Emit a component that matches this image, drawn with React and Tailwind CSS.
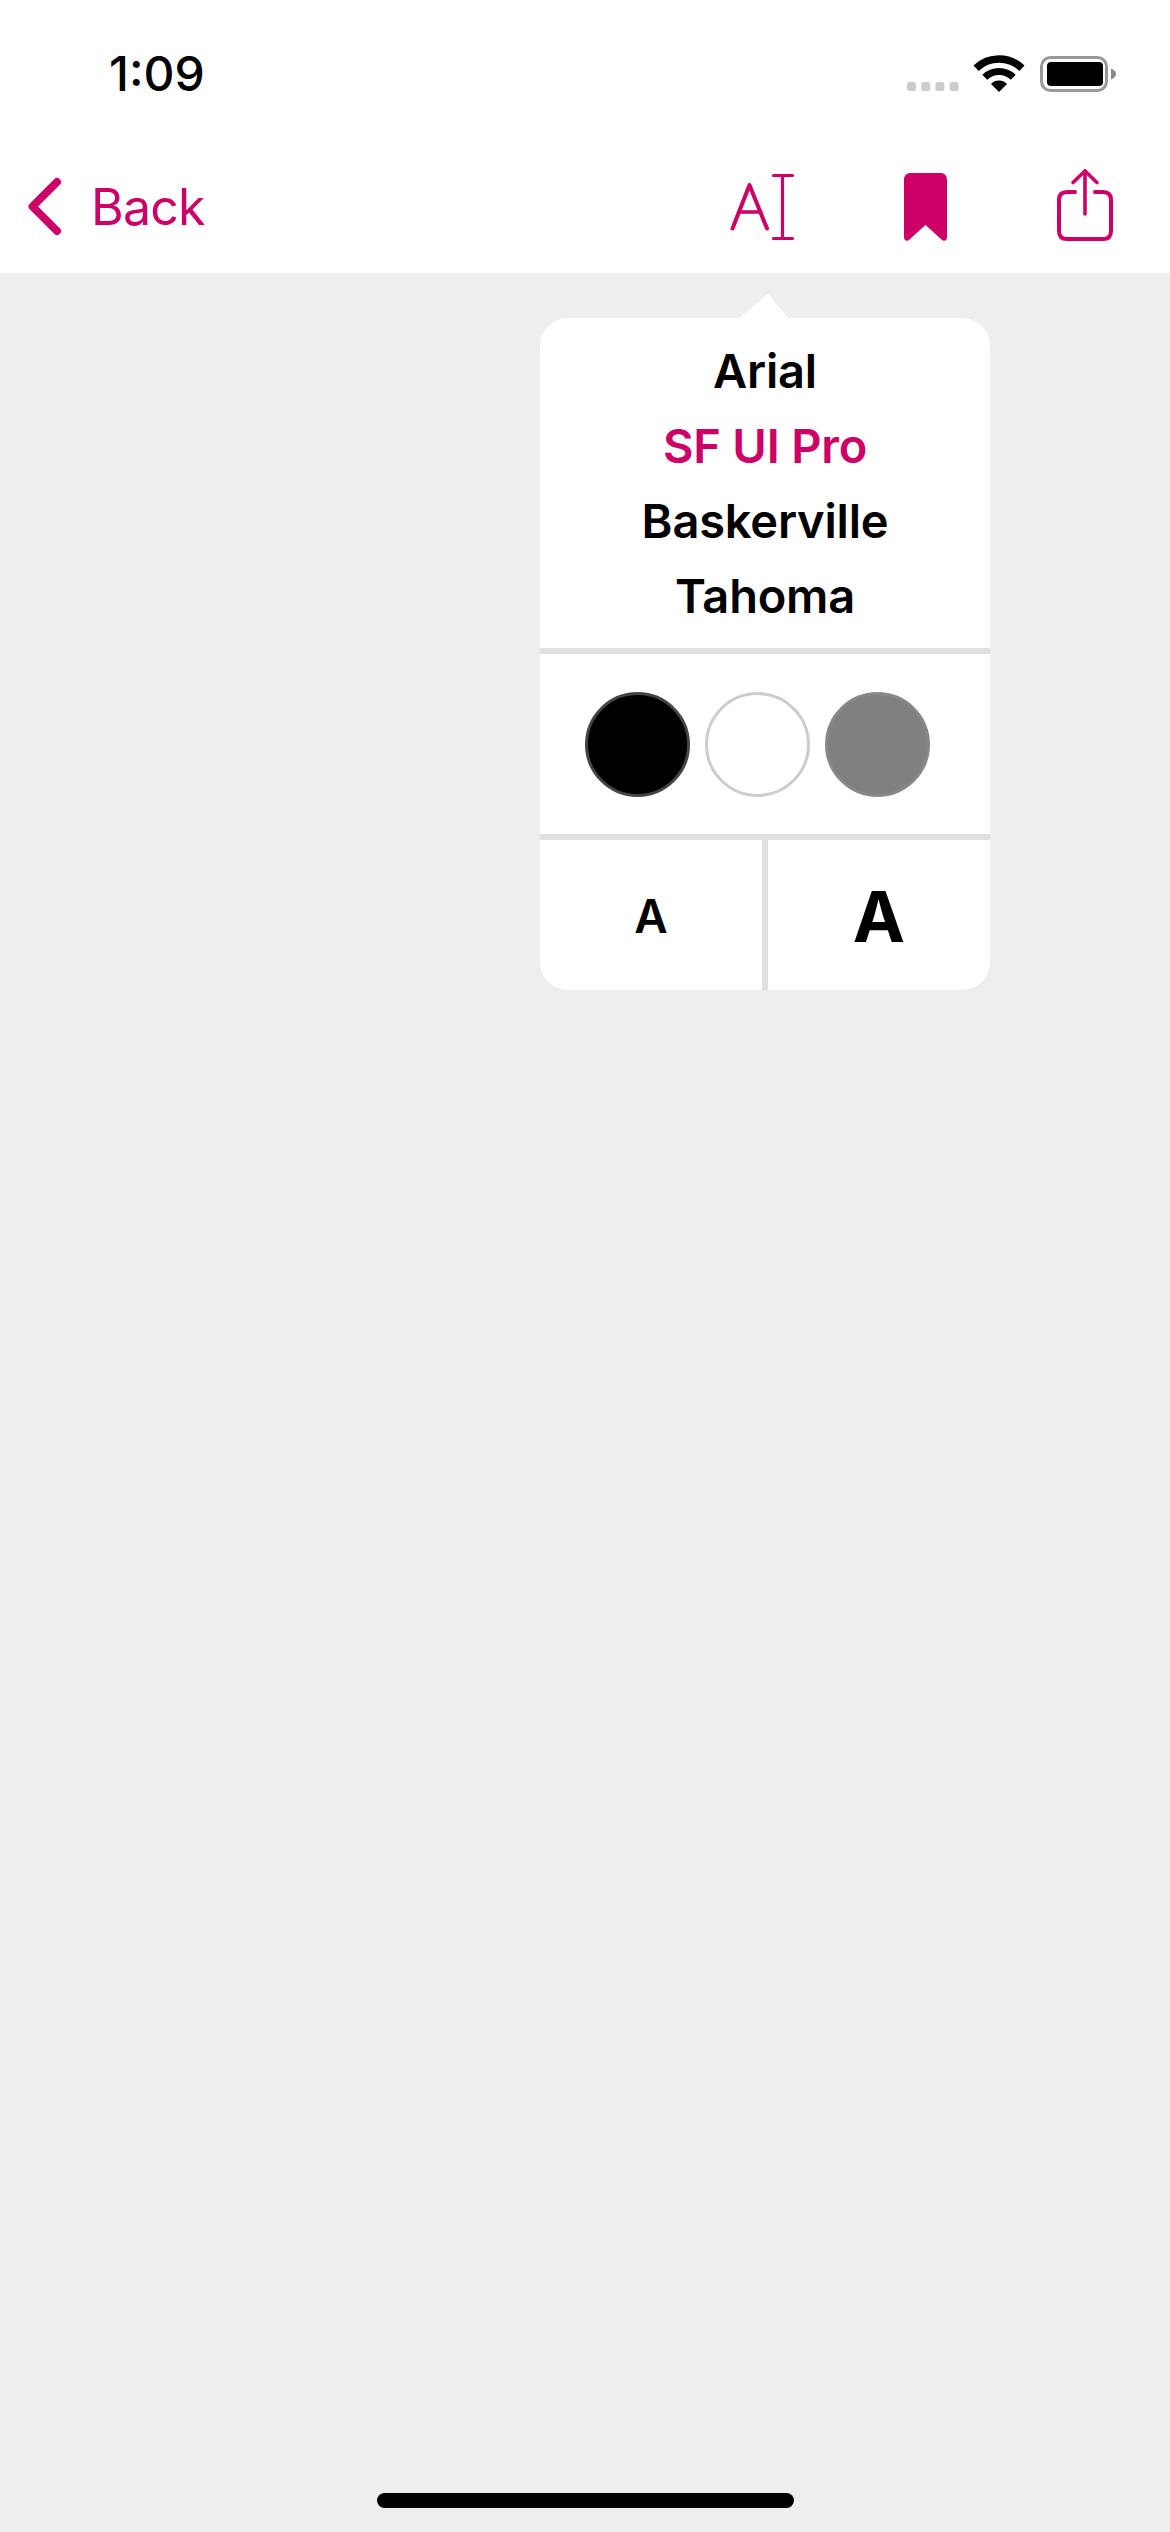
import React from "react";

const pink = "#cc0066";

function arc(cx, cy, r, deg) {
  const a = (deg * Math.PI) / 180;
  const dx = r * Math.sin(a);
  const dy = r * Math.cos(a);
  return `M${cx - dx} ${cy - dy}A${r} ${r} 0 0 1 ${cx + dx} ${cy - dy}`;
}

function StatusIcons() {
  return (
    <svg width="220" height="44" viewBox="900 52 220 44" className="block">
      {[907, 921.2, 935.4, 949.6].map((x) => (
        <rect key={x} x={x} y="82" width="9" height="9" rx="2.5" fill="#cccccc" />
      ))}
      <path d={arc(999, 92, 33, 44)} fill="none" stroke="#000" strokeWidth="7.5" />
      <path d={arc(999, 92, 20.5, 44)} fill="none" stroke="#000" strokeWidth="7" />
      <path d="M999 92L991 84A11 11 0 0 1 1007 84Z" fill="#000" />
      <rect x="1041.5" y="57.5" width="65" height="33" rx="9" fill="#fff" stroke="#999999" strokeWidth="3" />
      <rect x="1047" y="62" width="56" height="24" rx="4" fill="#000" />
      <path d="M1111 68.5C1114.5 70 1116 72 1116 74C1116 76 1114.5 78 1111 79.5Z" fill="#888888" />
    </svg>
  );
}

function Chevron() {
  return (
    <svg width="45" height="80" viewBox="20 167 45 80" className="block">
      <path d="M57 182L32.5 206.5L57 231" fill="none" stroke={pink} strokeWidth="8" strokeLinecap="round" strokeLinejoin="round" />
    </svg>
  );
}

function FontIcon() {
  return (
    <svg width="80" height="80" viewBox="720 167 80 80" className="block">
      <g fill="none" stroke={pink} strokeLinecap="round">
        <path d="M732.5 228.5L749.5 185L767 228.5" strokeWidth="4" strokeLinejoin="round" />
        <path d="M739 212H761" strokeWidth="3.5" />
        <path d="M773.5 175.5H792.5M773.5 238.5H792.5" strokeWidth="3.2" />
        <path d="M782.5 175.5V238.5" strokeWidth="3.2" />
      </g>
    </svg>
  );
}

function BookmarkIcon() {
  return (
    <svg width="60" height="80" viewBox="895 167 60 80" className="block">
      <path
        d="M911 173H940C944.5 173 947 175.5 947 180V237C947 240.5 944 242 941.5 239.5L925.5 225L909.5 239.5C907 242 904 240.5 904 237V180C904 175.5 906.5 173 911 173Z"
        fill={pink}
      />
    </svg>
  );
}

function ShareIcon() {
  return (
    <svg width="70" height="80" viewBox="1050 167 70 80" className="block">
      <g fill="none" stroke={pink} strokeLinecap="round" strokeLinejoin="round">
        <path d="M1075 192H1067C1061.5 192 1059 194.5 1059 200V231C1059 236.5 1061.5 239 1067 239H1103C1108.5 239 1111 236.5 1111 231V200C1111 194.5 1108.5 192 1103 192H1095" strokeWidth="4" />
        <path d="M1085 214V171" strokeWidth="3.6" />
        <path d="M1073 182.5L1085 171L1097 182.5" strokeWidth="3.6" />
      </g>
    </svg>
  );
}

export default function App() {
  return (
    <div className="flex h-[2532px] w-[1170px] flex-col bg-[#eeeeee] font-['Inter',sans-serif] text-black">
      <header className="bg-white">
        <div className="flex h-[148px] items-center justify-between pl-[109px] pr-[50px]">
          <span className="text-[48px] font-medium leading-none">1:09</span>
          <StatusIcons />
        </div>
        <nav className="flex h-[125px] items-center pb-[7px] pl-[20px] pr-[50px]">
          <Chevron />
          <span className="ml-[26px] text-[50px] font-normal leading-none tracking-[-0.8px] text-[#cc0066]">Back</span>
          <div className="ml-auto flex items-center gap-[95px]">
            <FontIcon />
            <BookmarkIcon />
            <ShareIcon />
          </div>
        </nav>
      </header>

      <main className="flex-1 pl-[540px] pt-[45px]">
        <div className="relative w-[450px] rounded-[28px] bg-white">
          <svg width="50" height="24" viewBox="739 294 50 24" className="absolute left-[199px] top-[-24px] block">
            <path d="M739 318L768 294L788 318Z" fill="#fff" />
          </svg>
          <ul className="py-[15px] text-center text-[47px] font-semibold leading-[75px] tracking-[-0.2px]">
            <li>Arial</li>
            <li className="text-[#cc0066]">SF UI Pro</li>
            <li>Baskerville</li>
            <li>Tahoma</li>
          </ul>
          <div className="flex gap-[15px] border-y-[6px] border-[#e0e0e2] pb-[37px] pl-[45px] pt-[38px]">
            <div className="h-[105px] w-[105px] rounded-full border-[3px] border-[#444444] bg-black" />
            <div className="h-[105px] w-[105px] rounded-full border-[3px] border-[#cccccc] bg-white" />
            <div className="h-[105px] w-[105px] rounded-full border-[3px] border-[#888888] bg-[#808080]" />
          </div>
          <div className="flex h-[150px]">
            <div className="flex w-[222px] items-center justify-center pt-[2px] text-[46px] font-semibold leading-none">A</div>
            <div className="w-[6px] bg-[#e0e0e2]" />
            <div className="flex flex-1 items-center justify-center pt-[4px] text-[70px] font-bold leading-none">A</div>
          </div>
        </div>
      </main>

      <footer className="flex justify-center pb-[24px]">
        <div className="h-[15px] w-[417px] rounded-full bg-black" />
      </footer>
    </div>
  );
}
